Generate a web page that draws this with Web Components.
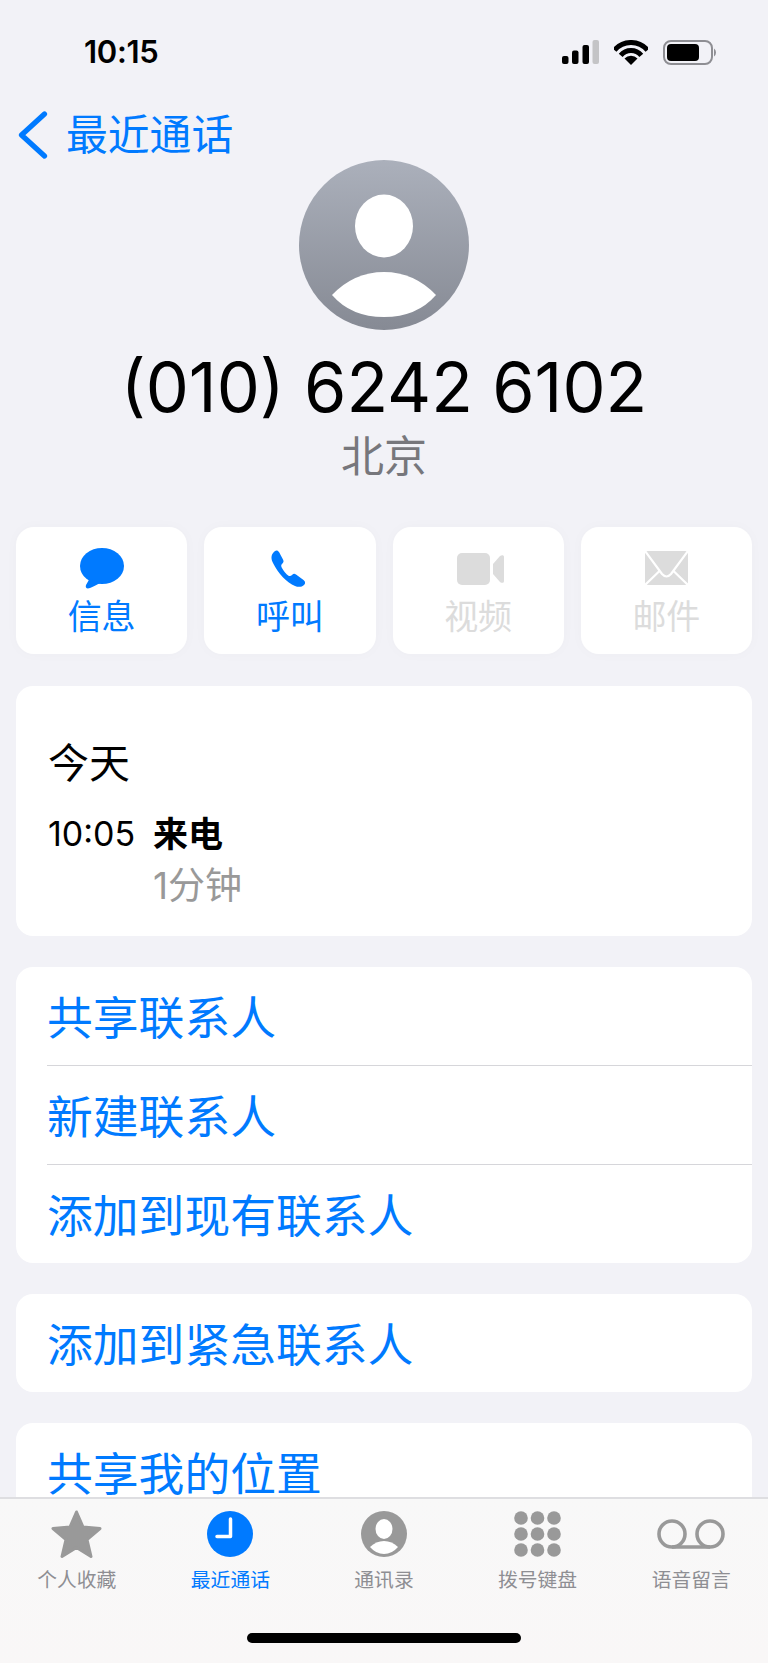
<!DOCTYPE html>
<html lang="zh-CN">
<head>
<meta charset="utf-8">
<title>最近通话</title>
<style>
    html, body { margin:0; padding:0; background:#f2f2f7; }
    body { font-family:Inter, "Noto Sans CJK SC", sans-serif; }
</style>
</head>
<body>

<call-detail-page>
    <status-bar slot="top" time="10:15"></status-bar>
    <back-nav slot="top">最近通话</back-nav>
    <contact-header slot="top" number="(010) 6242 6102" place="北京"></contact-header>

    <action-row slot="top">
        <action-button label="信息">
            <svg width="44" height="41" viewBox="0 0 44 41"><ellipse cx="22" cy="18" rx="22" ry="18" fill="#007aff"/><path d="M10 30L6 37C5 40 7 41 10 40C14 38.5 17 36.5 20 35Z" fill="#007aff"/></svg>
        </action-button>
        <action-button label="呼叫">
            <svg style="margin:0 3px 2px 0" width="36" height="37" viewBox="0 0 36 37"><path d="M5 1C6.5 0 8 .5 9 2L13 9.5C14 11.5 13.5 12.5 12 14C11 15 11 16 11.7 17.5C13.5 21 16 24 18.5 25.7C20 26.5 21 26 22 25C23.5 23.5 24.5 23.5 26 24.5L33.5 30C35.5 31.5 35.5 33.5 34 35C32 37 28.5 37.5 25 36C17 33 8 23 3 13C.5 8 1 4 5 1Z" fill="#007aff"/></svg>
        </action-button>
        <action-button label="视频" disabled>
            <svg style="margin:0 0 4px 4px" width="47" height="32" viewBox="0 0 47 32"><rect width="33" height="32" rx="5" fill="#dcdcdc"/><path d="M36 11L43 3C45 1.500 47 2 47 4V28C47 30 45 30.500 43 29L36 21Z" fill="#dcdcdc"/></svg>
        </action-button>
        <action-button label="邮件" disabled>
            <svg style="margin-bottom:4px" width="43" height="34" viewBox="0 0 43 34"><rect width="43" height="34" rx="3" fill="#dcdcdc"/><path d="M0 0L17 23Q21.500 28 26 23L43 0M0 34L15 19.500M43 34L28 19.500" fill="none" stroke="#fff" stroke-width="2.200"/></svg>
        </action-button>
    </action-row>

    <group-card>
        <call-log day="今天" time="10:05" kind="来电" duration="1分钟"></call-log>
    </group-card>

    <group-card>
        <link-row>共享联系人</link-row>
        <link-row divider>新建联系人</link-row>
        <link-row divider>添加到现有联系人</link-row>
    </group-card>

    <group-card>
        <link-row>添加到紧急联系人</link-row>
    </group-card>

    <group-card>
        <link-row>共享我的位置</link-row>
    </group-card>

    <tab-bar slot="bottom">
        <tab-item label="个人收藏">
            <svg width="51" height="49" viewBox="0 0 51 49"><path d="M25.500 2L32 17L49 18.500L36 29.500L40 46.500L25.500 37.500L11 46.500L15 29.500L2 18.500L19 17Z" fill="#999" stroke="#999" stroke-width="3" stroke-linejoin="round"/></svg>
        </tab-item>
        <tab-item label="最近通话" active>
            <svg width="46" height="46" viewBox="0 0 46 46"><circle cx="23" cy="23" r="23" fill="#007aff"/><path d="M23.500 8V25.500H10" fill="none" stroke="#fff" stroke-width="3.500" stroke-linecap="round" stroke-linejoin="round"/></svg>
        </tab-item>
        <tab-item label="通讯录">
            <svg width="46" height="46" viewBox="0 0 46 46"><circle cx="23" cy="23" r="23" fill="#999"/><ellipse cx="23" cy="18" rx="8.500" ry="10" fill="#fff"/><path d="M9 36Q15 30 23 30Q31 30 37 36Q31 43 23 43Q15 43 9 36Z" fill="#fff"/></svg>
        </tab-item>
        <tab-item label="拨号键盘">
            <svg style="margin-right:1px" width="47" height="46" viewBox="0 0 47 46"><g fill="#999"><circle cx="7" cy="7" r="6.800"/><circle cx="23.500" cy="7" r="6.800"/><circle cx="40" cy="7" r="6.800"/><circle cx="7" cy="23" r="6.800"/><circle cx="23.500" cy="23" r="6.800"/><circle cx="40" cy="23" r="6.800"/><circle cx="7" cy="39" r="6.800"/><circle cx="23.500" cy="39" r="6.800"/><circle cx="40" cy="39" r="6.800"/></g></svg>
        </tab-item>
        <tab-item label="语音留言">
            <svg width="68" height="30" viewBox="0 0 68 30"><g fill="none" stroke="#999" stroke-width="3.600"><circle cx="15" cy="15" r="13"/><circle cx="53" cy="15" r="13"/><path d="M15 28H53"/></g></svg>
        </tab-item>
    </tab-bar>
</call-detail-page>

<script>
const CJK = 'Inter, "Noto Sans CJK SC", sans-serif';

// PAGE - top block, cards that get cut off by the tab bar, tab bar
const template_page = document.createElement("template");
template_page.innerHTML = `
<style>
    :host { display:flex; flex-direction:column; width:768px; height:1663px; overflow:hidden; background:#f2f2f7; font-family:${CJK}; }
    #scroll { flex:1; min-height:0; overflow:hidden; }
    #cards { display:flex; flex-direction:column; gap:31px; padding:32px 16px 0; }
</style>
<div id="scroll">
    <slot name="top"></slot>
    <div id="cards"><slot></slot></div>
</div>
<slot name="bottom"></slot>
`;
class CallDetailPage extends HTMLElement {
    constructor(){
        super();
        this.attachShadow({mode:"open"}).appendChild(template_page.content.cloneNode(true));
    }
}
customElements.define("call-detail-page", CallDetailPage);

// STATUS BAR
const template_status = document.createElement("template");
template_status.innerHTML = `
<style>
    :host { display:flex; align-items:center; justify-content:space-between; height:110px; padding:0 52px 6px 84px; box-sizing:border-box; }
    #time { font-size:31px; font-weight:600; color:#000; line-height:36px; letter-spacing:-.3px; }
    #icons { display:flex; align-items:center; gap:15px; }
</style>
<span id="time"></span>
<div id="icons">
    <svg width="37" height="24" viewBox="0 0 37 24"><rect y="16" width="6.500" height="8" rx="2"/><rect x="10" y="10.500" width="6.500" height="13.500" rx="2"/><rect x="20.500" y="5" width="6.500" height="19" rx="2"/><rect x="30.500" width="6.500" height="24" rx="2" fill="#c4c4c6"/></svg>
    <svg width="34" height="25" viewBox="0 0 34 25"><g fill="none" stroke="#000" stroke-width="5"><path d="M.5 10.200A21.500 21.500 0 0 1 33.500 10.200"/><path d="M6.700 15.300A13.500 13.500 0 0 1 27.300 15.300"/></g><path d="M17 25L10.500 18.500A9 9 0 0 1 23.500 18.500Z"/></svg>
    <svg width="53" height="25" viewBox="0 0 53 25"><rect x="1" y="1" width="48" height="23" rx="7" fill="none" stroke="#8e8e93" stroke-width="2"/><rect x="4" y="4" width="32" height="17" rx="4"/><path d="M51 8.500Q53 10 53 12.500Q53 15 51 16.500Z" fill="#8e8e93"/></svg>
</div>
`;
class StatusBar extends HTMLElement {
    constructor(){
        super();
        this.attachShadow({mode:"open"}).appendChild(template_status.content.cloneNode(true));
    }
    connectedCallback(){
        this.shadowRoot.querySelector("#time").innerText = this.getAttribute("time");
    }
}
customElements.define("status-bar", StatusBar);

// BACK LINK
const template_nav = document.createElement("template");
template_nav.innerHTML = `
<style>
    :host { display:flex; align-items:center; height:50px; padding-left:18px; gap:18px; color:#007aff; font-size:41.800px; line-height:50px; }
    svg { display:block; }
</style>
<svg width="30" height="48" viewBox="0 0 30 48"><path d="M26.500 3L3.500 24L26.500 45" fill="none" stroke="#007aff" stroke-width="5.200" stroke-linecap="round" stroke-linejoin="round"/></svg>
<span><slot></slot></span>
`;
class BackNav extends HTMLElement {
    constructor(){
        super();
        this.attachShadow({mode:"open"}).appendChild(template_nav.content.cloneNode(true));
    }
}
customElements.define("back-nav", BackNav);

// AVATAR + NUMBER + PLACE
const template_header = document.createElement("template");
template_header.innerHTML = `
<style>
    :host { display:flex; flex-direction:column; align-items:center; }
    svg { display:block; }
    #number { font-size:68.400px; line-height:76px; margin-top:19px; color:#000; font-weight:400; white-space:nowrap; }
    #place { font-size:43px; line-height:50px; margin-top:6px; color:#77777c; }
</style>
<svg width="170" height="170" viewBox="0 0 170 170">
    <defs><linearGradient id="g" x1="0" y1="0" x2="0" y2="1"><stop offset="0" stop-color="#abb0bb"/><stop offset="1" stop-color="#868a94"/></linearGradient></defs>
    <circle cx="85" cy="85" r="85" fill="url(#g)"/>
    <ellipse cx="85" cy="66" rx="29" ry="31.500" fill="#fff"/>
    <path d="M33 135Q55 112 85 112Q115 112 137 135Q118 157 85 157Q52 157 33 135Z" fill="#fff"/>
</svg>
<div id="number"></div>
<div id="place"></div>
`;
class ContactHeader extends HTMLElement {
    constructor(){
        super();
        this.attachShadow({mode:"open"}).appendChild(template_header.content.cloneNode(true));
    }
    connectedCallback(){
        this.shadowRoot.querySelector("#number").innerText = this.getAttribute("number");
        this.shadowRoot.querySelector("#place").innerText = this.getAttribute("place");
    }
}
customElements.define("contact-header", ContactHeader);

// ROW OF FOUR ACTIONS
const template_actions = document.createElement("template");
template_actions.innerHTML = `
<style>
    :host { display:grid; grid-template-columns:repeat(4, 1fr); gap:17px; margin-top:46px; padding:0 16px; }
</style>
<slot></slot>
`;
class ActionRow extends HTMLElement {
    constructor(){
        super();
        this.attachShadow({mode:"open"}).appendChild(template_actions.content.cloneNode(true));
    }
}
customElements.define("action-row", ActionRow);

const template_action = document.createElement("template");
template_action.innerHTML = `
<style>
    :host { display:flex; flex-direction:column; align-items:center; height:127px; box-sizing:border-box; background:#fff; border-radius:18px; box-shadow:0 0 14px rgba(0,0,0,.025); color:#007aff; }
    :host([disabled]) { color:#dcdcdc; }
    #icon { height:62px; display:flex; align-items:flex-end; justify-content:center; }
    ::slotted(svg) { display:block; }
    #label { font-size:34px; line-height:44px; margin-top:6px; }
</style>
<div id="icon"><slot></slot></div>
<div id="label"></div>
`;
class ActionButton extends HTMLElement {
    constructor(){
        super();
        this.attachShadow({mode:"open"}).appendChild(template_action.content.cloneNode(true));
    }
    connectedCallback(){
        this.shadowRoot.querySelector("#label").innerText = this.getAttribute("label");
    }
}
customElements.define("action-button", ActionButton);

// WHITE CARD
const template_card = document.createElement("template");
template_card.innerHTML = `
<style>
    :host { display:block; background:#fff; border-radius:17px; overflow:hidden; }
</style>
<slot></slot>
`;
class GroupCard extends HTMLElement {
    constructor(){
        super();
        this.attachShadow({mode:"open"}).appendChild(template_card.content.cloneNode(true));
    }
}
customElements.define("group-card", GroupCard);

// CALL HISTORY ENTRY
const template_log = document.createElement("template");
template_log.innerHTML = `
<style>
    :host { display:block; height:250px; box-sizing:border-box; padding:52px 32px 0 32px; }
    #day { font-size:41px; line-height:50px; color:#000; }
    #row { display:flex; margin-top:21px; }
    #time { width:105px; font-size:34px; line-height:50px; color:#000; }
    #kind { font-size:35px; line-height:50px; font-weight:700; color:#000; }
    #dur { font-size:37px; line-height:50px; margin-top:2px; color:#999; }
</style>
<div id="day"></div>
<div id="row">
    <div id="time"></div>
    <div>
        <div id="kind"></div>
        <div id="dur"></div>
    </div>
</div>
`;
class CallLog extends HTMLElement {
    constructor(){
        super();
        this.attachShadow({mode:"open"}).appendChild(template_log.content.cloneNode(true));
    }
    connectedCallback(){
        for (const key of ["day", "time", "kind", "dur"]) {
            const attr = key == "dur" ? "duration" : key;
            this.shadowRoot.querySelector("#" + key).innerText = this.getAttribute(attr);
        }
    }
}
customElements.define("call-log", CallLog);

// BLUE LINK ROW
const template_link = document.createElement("template");
template_link.innerHTML = `
<style>
    :host { display:block; padding-left:31px; color:#007aff; font-size:45.800px; }
    #inner { height:98px; display:flex; align-items:center; box-sizing:border-box; padding-bottom:2px; }
    :host([divider]) #inner { height:99px; border-top:1px solid #d6d6da; }
</style>
<div id="inner"><slot></slot></div>
`;
class LinkRow extends HTMLElement {
    constructor(){
        super();
        this.attachShadow({mode:"open"}).appendChild(template_link.content.cloneNode(true));
    }
}
customElements.define("link-row", LinkRow);

// TAB BAR
const template_tabs = document.createElement("template");
template_tabs.innerHTML = `
<style>
    :host { display:flex; flex-direction:column; align-items:center; flex:none; height:166px; box-sizing:border-box; background:linear-gradient(#f8f8f8, #f9f7f7); border-top:2px solid #dedee1; }
    #tabs { display:grid; grid-template-columns:repeat(5, 1fr); width:100%; padding-top:10px; }
    #home { width:274px; height:10px; border-radius:5px; background:#000; margin-top:40px; }
</style>
<div id="tabs"><slot></slot></div>
<div id="home"></div>
`;
class TabBar extends HTMLElement {
    constructor(){
        super();
        this.attachShadow({mode:"open"}).appendChild(template_tabs.content.cloneNode(true));
    }
}
customElements.define("tab-bar", TabBar);

const template_tab = document.createElement("template");
template_tab.innerHTML = `
<style>
    :host { display:flex; flex-direction:column; align-items:center; color:#8e8e93; }
    :host([active]) { color:#007aff; }
    #icon { height:50px; display:flex; align-items:center; justify-content:center; }
    ::slotted(svg) { display:block; }
    #label { font-size:19.800px; line-height:26px; margin-top:8px; }
</style>
<div id="icon"><slot></slot></div>
<div id="label"></div>
`;
class TabItem extends HTMLElement {
    constructor(){
        super();
        this.attachShadow({mode:"open"}).appendChild(template_tab.content.cloneNode(true));
    }
    connectedCallback(){
        this.shadowRoot.querySelector("#label").innerText = this.getAttribute("label");
    }
}
customElements.define("tab-item", TabItem);
</script>
</body>
</html>
